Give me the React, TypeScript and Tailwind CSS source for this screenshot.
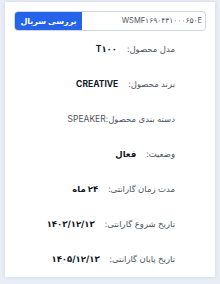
import React from 'react';

const rows: { label: string; value: string; bold: boolean; tight?: boolean }[] = [
  { label: 'مدل محصول:', value: 'T۱۰۰', bold: true },
  { label: 'برند محصول:', value: 'CREATIVE', bold: true },
  { label: 'دسته بندی محصول:', value: 'SPEAKER', bold: false, tight: true },
  { label: 'وضعیت:', value: 'فعال', bold: true },
  { label: 'مدت زمان گارانتی:', value: '۲۴ ماه', bold: true },
  { label: 'تاریخ شروع گارانتی:', value: '۱۴۰۳/۱۲/۱۳', bold: true },
  { label: 'تاریخ پایان گارانتی:', value: '۱۴۰۵/۱۲/۱۳', bold: true },
];

export default function App() {
  return (
    <div
      className="w-[220px] h-[284px] bg-[#e9eef6] px-[5px] pt-[2px] pb-[7px]"
      style={{ fontFamily: "Inter, 'DejaVu Sans', sans-serif" }}
    >
      <div dir="rtl" className="h-full bg-white shadow-[0_0_4px_rgba(150,170,200,0.35)] px-[9px] pt-[9px]">
        {/* serial search */}
        <div className="flex h-[20px] rounded-[4px] border border-[#cfd6e0] overflow-hidden">
          <div dir="ltr" className="flex-1 flex items-center justify-end pr-[3px] text-[7.5px] text-[#4b5563]">
            WSMF۱۶۹۰۴۳۱۰۰۰۶۵۰E
          </div>
          <button className="w-[67px] bg-[#2563eb] text-white text-[8px] font-bold">
            بررسی سریال
          </button>
        </div>

        {/* details */}
        <div className="pr-[31px] pt-px">
          {rows.map((r) => (
            <div key={r.label} className={`h-[35px] flex items-center text-[8.5px] ${r.tight ? 'gap-0' : 'gap-[10px]'}`}>
              <span className="text-[#4b5563]">{r.label}</span>
              <span className={r.bold ? 'font-bold text-[#111827]' : 'text-[#4b5563]'}>{r.value}</span>
            </div>
          ))}
        </div>
      </div>
    </div>
  );
}
